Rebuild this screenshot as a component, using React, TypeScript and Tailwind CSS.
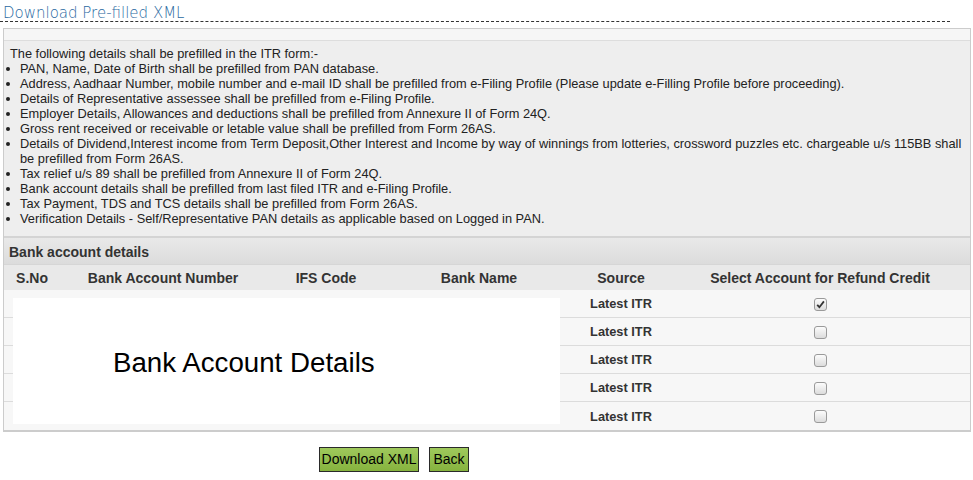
import React from 'react';

const points = [
  'PAN, Name, Date of Birth shall be prefilled from PAN database.',
  'Address, Aadhaar Number, mobile number and e-mail ID shall be prefilled from e-Filing Profile (Please update e-Filling Profile before proceeding).',
  'Details of Representative assessee shall be prefilled from e-Filing Profile.',
  'Employer Details, Allowances and deductions shall be prefilled from Annexure II of Form 24Q.',
  'Gross rent received or receivable or letable value shall be prefilled from Form 26AS.',
  'Details of Dividend,Interest income from Term Deposit,Other Interest and Income by way of winnings from lotteries, crossword puzzles etc. chargeable u/s 115BB shall be prefilled from Form 26AS.',
  'Tax relief u/s 89 shall be prefilled from Annexure II of Form 24Q.',
  'Bank account details shall be prefilled from last filed ITR and e-Filing Profile.',
  'Tax Payment, TDS and TCS details shall be prefilled from Form 26AS.',
  'Verification Details - Self/Representative PAN details as applicable based on Logged in PAN.',
];

const cols = 'grid grid-cols-[56px_206px_120px_186px_98px_1fr]';

function Checkbox({ checked }: { checked?: boolean }) {
  return (
    <span className="flex h-[13px] w-[13px] items-center justify-center rounded-[3px] border border-[#9a9a9a] bg-gradient-to-b from-[#fcfcfc] to-[#dcdcdc]">
      {checked && (
        <svg width="9" height="9" viewBox="0 0 9 9">
          <path d="M1.2 4.8 L3.4 7.2 L7.9 1.4" fill="none" stroke="#333" strokeWidth="1.8" />
        </svg>
      )}
    </span>
  );
}

export default function App() {
  const rows = [true, false, false, false, false];
  return (
    <div className="relative h-[480px] w-[973px] bg-white font-['Liberation_Sans',Arial,sans-serif] text-[#222]">
      <div className="w-[950px] border-b border-dashed border-[#333] pl-[3px] pt-[1px] h-[22px]">
        <span className="font-['DejaVu_Sans',sans-serif] text-[15px] font-light leading-[20px] text-[#2a69a1]">
          Download Pre-filled XML
        </span>
      </div>

      <div className="ml-[3px] mt-[6px] w-[968px] border border-[#cccccc] border-b-2">
        <div className="h-[12px] border-b border-[#dddddd] bg-[#f6f6f6]" />
        <div className="bg-[#eeeeee] pl-[6px] pr-2 pt-[5px] pb-[10px] text-[12.8px] leading-[15px] border-b-2 border-[#d4d4d4]">
          <div>The following details shall be prefilled in the ITR form:-</div>
          <ul>
            {points.map((p) => (
              <li key={p} className="relative pl-[10px]">
                <span className="absolute left-[-4px] top-[6px] h-[4px] w-[4px] rounded-full bg-[#222]" />
                {p}
              </li>
            ))}
          </ul>
        </div>

        <div className="flex h-[27px] items-center bg-gradient-to-b from-[#e9e9e9] to-[#dcdcdc] pl-[5px] pt-[2px] text-[14px] font-bold text-[#333] border-b border-[#d6d6d6]">
          Bank account details
        </div>

        <div className={`${cols} h-[25px] items-center bg-[#e9e9e9] pt-[2px] text-center text-[14px] font-bold text-[#333]`}>
          <div>S.No</div>
          <div>Bank Account Number</div>
          <div>IFS Code</div>
          <div>Bank Name</div>
          <div>Source</div>
          <div>Select Account for Refund Credit</div>
        </div>

        {rows.map((c, i) => (
          <div
            key={i}
            className={`${cols} h-[28px] items-center bg-[#f7f7f7] pt-[1px] text-center text-[12.8px] font-bold text-[#333] ${i < 4 ? 'border-b border-[#dcdcdc]' : ''}`}
          >
            <div />
            <div />
            <div />
            <div />
            <div>Latest ITR</div>
            <div className="flex justify-center">
              <Checkbox checked={c} />
            </div>
          </div>
        ))}
      </div>

      <div className="absolute left-[13px] top-[298px] flex h-[126px] w-[547px] items-center bg-white pl-[100px] pt-[3px] text-[27.7px] text-black">
        Bank Account Details
      </div>

      <div className="mt-[15px] flex gap-[10px] pl-[319px]">
        <button className="h-[25px] w-[100px] border border-[#2a2a2a] bg-gradient-to-b from-[#9fc95c] to-[#86b33e] text-[14px] text-black">
          Download XML
        </button>
        <button className="h-[25px] w-[40px] border border-[#2a2a2a] bg-gradient-to-b from-[#9fc95c] to-[#86b33e] text-[14px] text-black">
          Back
        </button>
      </div>
    </div>
  );
}
